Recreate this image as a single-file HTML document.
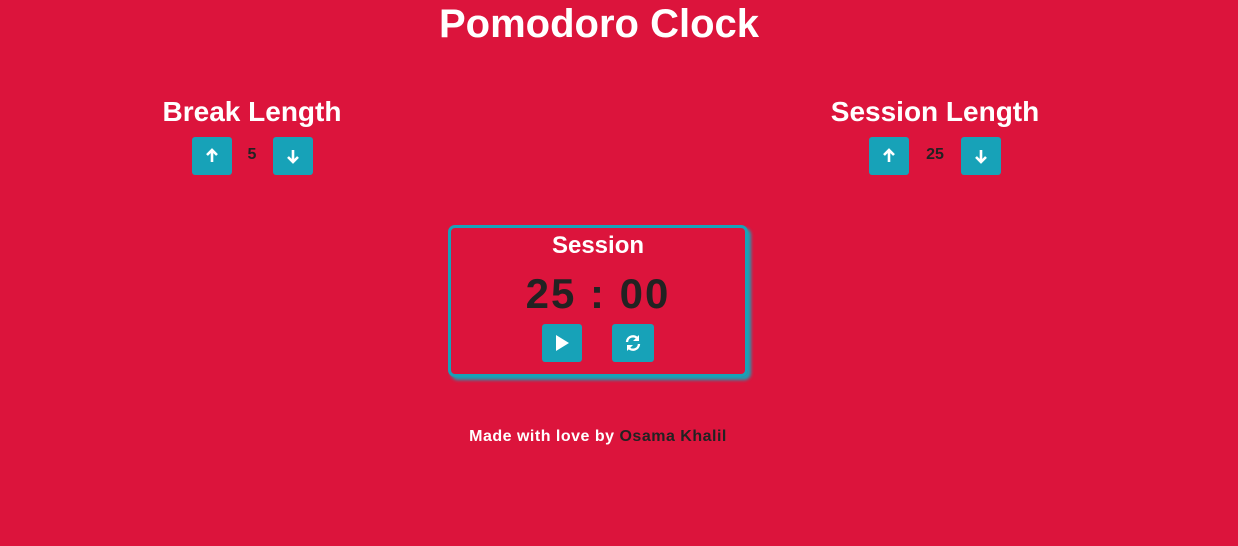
<!DOCTYPE html>
<html><head><style>
body{margin:0;background:#dc143c;width:1238px;height:546px;overflow:hidden;font-family:"Liberation Sans",sans-serif;font-weight:bold;position:relative}
.a{position:absolute;text-align:center;color:#fff}
.b{position:absolute;width:40px;height:38px;background:#17a2b8;border-radius:3px;display:flex;align-items:center;justify-content:center}
.n{position:absolute;color:#222;font-size:16px;text-align:center;width:40px}
</style></head><body>
<div class="a" style="left:0;top:2px;font-size:40px;letter-spacing:0px;width:1198px">Pomodoro Clock</div>
<div class="a" style="left:102px;width:300px;top:96px;font-size:28px">Break Length</div>
<div class="a" style="left:785px;width:300px;top:96px;font-size:28px">Session Length</div>
<div class="b" style="left:192px;top:137px"><svg width="14" height="16" viewBox="0 0 14 16"><path d="M7 14V3M2 7l5-5 5 5" stroke="#fff" stroke-width="2.6" fill="none"/></svg></div>
<div class="n" style="left:232px;top:146px">5</div>
<div class="b" style="left:273px;top:137px"><svg width="14" height="16" viewBox="0 0 14 16"><path d="M7 2v11M2 9l5 5 5-5" stroke="#fff" stroke-width="2.6" fill="none"/></svg></div>
<div class="b" style="left:869px;top:137px"><svg width="14" height="16" viewBox="0 0 14 16"><path d="M7 14V3M2 7l5-5 5 5" stroke="#fff" stroke-width="2.6" fill="none"/></svg></div>
<div class="n" style="left:915px;top:146px">25</div>
<div class="b" style="left:961px;top:137px"><svg width="14" height="16" viewBox="0 0 14 16"><path d="M7 2v11M2 9l5 5 5-5" stroke="#fff" stroke-width="2.6" fill="none"/></svg></div>
<div style="position:absolute;left:448px;top:225px;width:294px;height:146px;border:3px solid #17a2b8;border-radius:7px;box-shadow:3px 3px 3px #17a2b8"></div>
<div class="a" style="left:448px;width:300px;top:232px;font-size:24px">Session</div>
<div class="a" style="left:448px;width:300px;top:270px;font-size:42px;color:#222;letter-spacing:2px">25 : 00</div>
<div class="b" style="left:542px;top:324px"><svg width="16" height="18" viewBox="0 0 16 18"><path d="M2 1l13 8-13 8z" fill="#fff"/></svg></div>
<div class="b" style="left:612px;top:324px;width:42px"><svg width="18" height="18" viewBox="0 0 18 18"><path d="M3 8a6 6 0 0 1 11-3M15 10a6 6 0 0 1-11 3" stroke="#fff" stroke-width="2.4" fill="none"/><path d="M15 1v6h-6zM3 17v-6h6z" fill="#fff"/></svg></div>
<div class="a" style="left:0;width:1196px;top:428px;font-size:16px;letter-spacing:0.5px">Made with love by <span style="color:#222">Osama Khalil</span></div>
</body></html>
